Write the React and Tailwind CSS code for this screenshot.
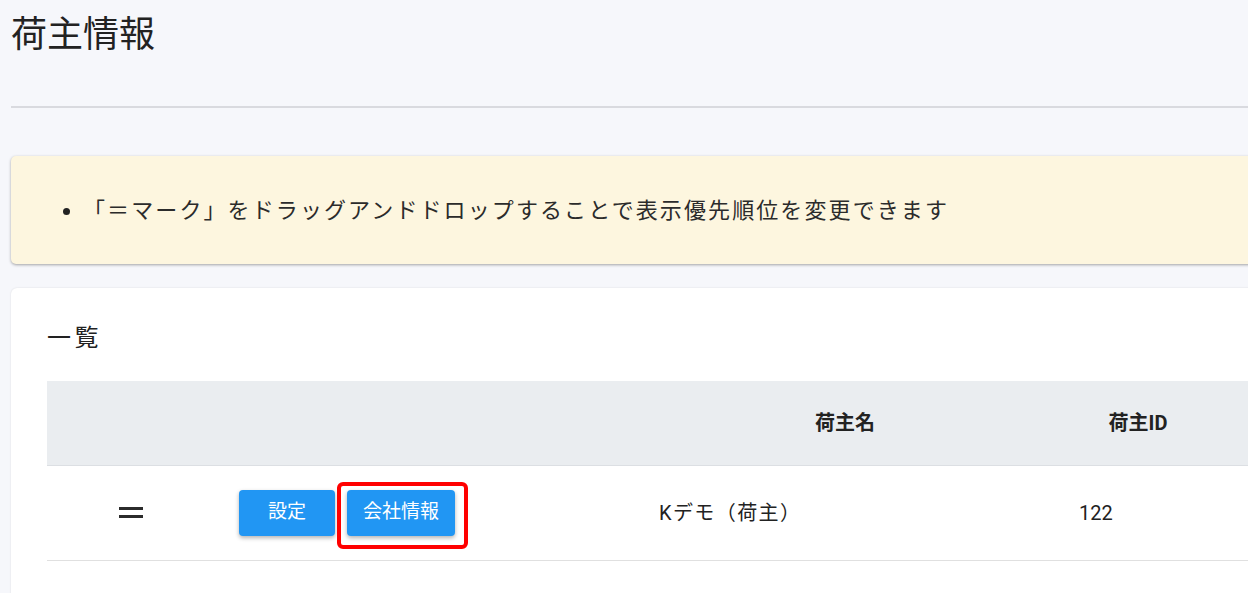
import React from 'react'

const font = { fontFamily: 'Roboto, "Noto Sans CJK JP", sans-serif' }

const shippers = [{ id: 122, name: 'Kデモ（荷主）' }]

function DragHandle() {
  return (
    <div className="flex flex-col gap-[5px] w-6 mx-auto">
      <span className="block h-[3px] bg-[#2b2b2b]" />
      <span className="block h-[3px] bg-[#2b2b2b]" />
    </div>
  )
}

export default function App() {
  return (
    <div className="w-[1248px] h-[593px] overflow-hidden bg-[#f6f7fb] text-[#222]" style={font}>
      <div className="w-[1400px] pl-[11px]">
        {/* page title */}
        <h1 className="text-[36px] leading-none pt-[17px] h-[106px]">荷主情報</h1>
        <div className="h-[2px] bg-[#d9dadf]" />

        {/* hint */}
        <div className="mt-[48px] h-[108px] bg-[#fdf6df] rounded-[5px] shadow-[0_1px_3px_rgba(0,0,0,0.35)] flex items-center">
          <ul className="list-disc pl-[72px] text-[22px] tracking-[2.1px] text-[#2b2b2b] marker:text-[#222]">
            <li>「＝マーク」をドラッグアンドドロップすることで表示優先順位を変更できます</li>
          </ul>
        </div>

        {/* list card */}
        <div className="mt-[24px] bg-white rounded-[6px] shadow-[0_0_2px_rgba(0,0,0,0.12)] pl-[36px] pt-[38px] h-[400px]">
          <h2 className="text-[24px] leading-none tracking-[3.5px] h-[55px]">一覧</h2>
          <table className="border-collapse table-fixed w-[1300px]">
            <colgroup>
              <col className="w-[168px]" />
              <col className="w-[420px]" />
              <col className="w-[420px]" />
              <col className="w-[166px]" />
              <col />
            </colgroup>
            <thead>
              <tr className="bg-[#eaedf0] h-[84px] border-b border-[#dcdfe3]">
                <th />
                <th />
                <th className="text-[20px] font-bold text-center">荷主名</th>
                <th className="text-[20px] font-bold text-center">荷主ID</th>
                <th />
              </tr>
            </thead>
            <tbody>
              {shippers.map((s) => (
                <tr key={s.id} className="h-[95px] border-b border-[#e0e0e0]">
                  <td className="px-6">
                    <DragHandle />
                  </td>
                  <td className="px-6">
                    <div className="flex items-center gap-3">
                      <button className="h-[46px] w-[96px] rounded-[4px] bg-[#2196f3] text-white text-[19px] shadow-[0_2px_4px_rgba(0,0,0,0.3)]">
                        設定
                      </button>
                      <div className="relative">
                        <button className="h-[46px] w-[108px] rounded-[4px] bg-[#2196f3] text-white text-[19px] shadow-[0_2px_4px_rgba(0,0,0,0.3)]">
                          会社情報
                        </button>
                        <span className="absolute -left-[10px] -top-[8px] w-[131px] h-[67px] border-4 border-[#ff0000] rounded-[6px] pointer-events-none" />
                      </div>
                    </div>
                  </td>
                  <td className="px-6 text-[20px] tracking-[1.4px]">{s.name}</td>
                  <td className="px-6 text-[20px]">{s.id}</td>
                  <td />
                </tr>
              ))}
            </tbody>
          </table>
        </div>
      </div>
    </div>
  )
}
